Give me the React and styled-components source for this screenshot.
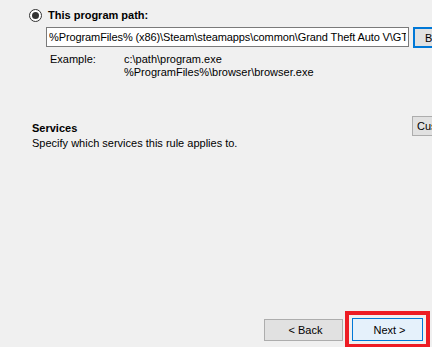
import React from 'react';
import styled, { createGlobalStyle } from 'styled-components';

const GlobalStyle = createGlobalStyle`
  html, body {
    margin: 0;
    padding: 0;
    background: #f0f0f0;
  }
  body {
    font-family: "Liberation Sans", Arial, sans-serif;
    font-size: 11px;
    color: #000;
  }
`;

export default function App() {
  return (
    <>
      <GlobalStyle />
      <Page>
        <ProgramSection>
          <RadioRow>
            <Radio checked />
            <Heading>This program path:</Heading>
          </RadioRow>
          <PathRow>
            <PathInput
              readOnly
              value="%ProgramFiles% (x86)\Steam\steamapps\common\Grand Theft Auto V\GTA5.exe"
            />
            <WinButton $focused $width={75} $height={21}>Browse...</WinButton>
          </PathRow>
          <ExampleGrid>
            <span>Example:</span>
            <span>
              c:\path\program.exe
              <br />
              %ProgramFiles%\browser\browser.exe
            </span>
          </ExampleGrid>
        </ProgramSection>

        <ServicesRow>
          <ServicesText>
            <Heading>Services</Heading>
            <Desc>Specify which services this rule applies to.</Desc>
          </ServicesText>
          <WinButton $width={75} $height={20}>Customize...</WinButton>
        </ServicesRow>

        <Spacer />

        <Footer>
          <WinButton $centered $width={79} $height={22}>&lt; Back</WinButton>
          <Highlight>
            <WinButton $primary $centered $width={71} $height={23}>Next &gt;</WinButton>
          </Highlight>
        </Footer>
      </Page>
    </>
  );
}

const Page = styled.div`
  width: 432px;
  height: 347px;
  display: flex;
  flex-direction: column;
  overflow: hidden;
`;

const ProgramSection = styled.div`
  padding: 9px 0 0 29px;
`;

const RadioRow = styled.div`
  display: flex;
  align-items: center;
  gap: 6px;
  height: 13px;
`;

const Radio = styled.span`
  box-sizing: border-box;
  width: 13px;
  height: 13px;
  border-radius: 50%;
  border: 1px solid #333;
  background: #fff;
  display: flex;
  align-items: center;
  justify-content: center;

  &::after {
    content: '';
    width: 7px;
    height: 7px;
    border-radius: 50%;
    background: ${(p) => (p.checked ? '#333' : 'transparent')};
  }
`;

const Heading = styled.div`
  font-weight: bold;
  font-size: 11px;
  line-height: 13px;
  white-space: nowrap;
`;

const PathRow = styled.div`
  display: flex;
  align-items: flex-start;
  gap: 4px;
  margin: 5px 0 0 17px;
`;

const PathInput = styled.input`
  box-sizing: border-box;
  width: 363px;
  height: 20px;
  flex: none;
  border: 1px solid #7a7a7a;
  background: #fff;
  padding: 0 2px;
  font-family: "Liberation Sans", Arial, sans-serif;
  font-size: 11px;
  letter-spacing: -0.1px;
  color: #000;
  outline: none;
`;

const WinButton = styled.button`
  box-sizing: border-box;
  flex: none;
  width: ${(p) => p.$width}px;
  height: ${(p) => p.$height}px;
  padding: 0 0 0 ${(p) => (p.$focused ? '10px' : '4px')};
  text-align: ${(p) => (p.$centered ? 'center' : 'left')};
  white-space: nowrap;
  overflow: hidden;
  font-family: "Liberation Sans", Arial, sans-serif;
  font-size: 11px;
  color: #000;
  background: ${(p) => (p.$primary ? '#e5f1fb' : '#e1e1e1')};
  border: ${(p) =>
    p.$focused ? '2px solid #0078d7' : p.$primary ? '1px solid #0078d7' : '1px solid #adadad'};
`;

const ExampleGrid = styled.div`
  display: grid;
  grid-template-columns: 74px auto;
  margin: 5px 0 0 21px;
  line-height: 13px;
  font-size: 11px;
`;

const ServicesRow = styled.div`
  display: flex;
  align-items: flex-start;
  margin-top: 37px;
  padding-left: 32px;
`;

const ServicesText = styled.div`
  flex: none;
  width: 380px;
  padding-top: 6px;
`;

const Desc = styled.div`
  line-height: 13px;
  margin-top: 2px;
`;

const Spacer = styled.div`
  flex: 1;
`;

const Footer = styled.div`
  display: flex;
  justify-content: flex-end;
  align-items: center;
  gap: 2px;
  padding-right: 2px;
  margin-bottom: -1px;
`;

const Highlight = styled.div`
  border: 4px solid #ed1c24;
  padding: 3px;
  display: flex;
`;
